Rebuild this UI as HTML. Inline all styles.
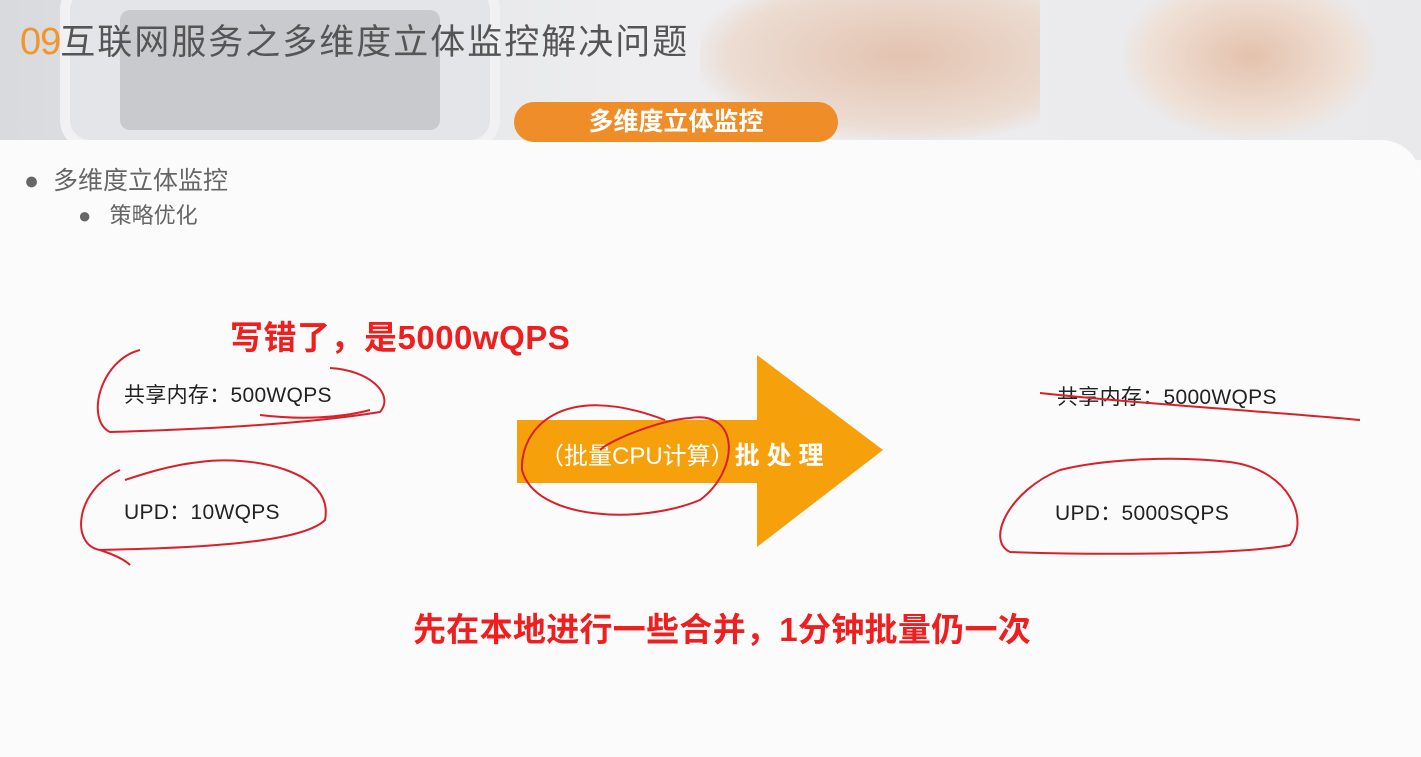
<!DOCTYPE html>
<html><head><meta charset="utf-8"><style>
body{margin:0;width:1421px;height:757px;overflow:hidden;background:#fafafa;position:relative;font-family:"Liberation Sans","Noto Sans CJK SC",sans-serif}
.top{position:absolute;left:0;top:0;width:1421px;height:160px;background:linear-gradient(90deg,#d9dadd 0%,#e6e7ea 30%,#eeeef0 45%,#e9e9ec 100%)}
.pad{position:absolute;left:60px;top:-20px;width:420px;height:150px;border-radius:30px;background:#e4e5e8;border:10px solid #f1f1f3}
.pad2{position:absolute;left:120px;top:10px;width:320px;height:120px;background:#c9cacd;border-radius:10px}
.hand{position:absolute;left:700px;top:0;width:340px;height:140px;background:radial-gradient(ellipse at 60% 40%,#e3c3b0,#ecdcd2 60%,transparent 75%)}
.hand2{position:absolute;left:1120px;top:0;width:260px;height:140px;background:radial-gradient(ellipse at 50% 40%,#e4c2ad,#efe0d6 55%,transparent 72%)}
.panel{position:absolute;left:0;top:140px;width:1421px;height:617px;background:#fbfbfb;border-radius:0 40px 0 0}
.title{position:absolute;left:20px;top:14px;font-size:35px;color:#555;letter-spacing:2px}
.title b{font-weight:normal;color:#f0962a;font-size:38px;letter-spacing:-1px}
.pill{position:absolute;left:514px;top:102px;width:324px;height:40px;border-radius:20px;background:#ef8d28;color:#fff;font-weight:bold;font-size:25px;text-align:center;line-height:40px}
.t{position:absolute;color:#222;font-size:21px;letter-spacing:0.3px}
.red{position:absolute;color:#f01e1e;font-weight:bold;font-size:33px;text-shadow:0 0 2px #fff}
svg{position:absolute;left:0;top:0}
</style></head><body>
<div class="top"><div class="pad"></div><div class="pad2"></div><div class="hand"></div><div class="hand2"></div></div>
<div class="panel"></div>
<div class="title"><b>09</b>互联网服务之多维度立体监控解决问题</div>
<div class="pill">多维度立体监控</div>
<div class="t" style="left:24px;top:161px;font-size:25px;color:#666;letter-spacing:0">●&nbsp; 多维度立体监控</div>
<div class="t" style="left:78px;top:198px;font-size:22px;color:#666;letter-spacing:0">●&nbsp;&nbsp; 策略优化</div>
<svg width="1421" height="757">
<polygon points="517,420 757,420 757,355 883,450 757,547 757,483 517,483" fill="#f6a00c"/>
</svg>
<div class="t" style="left:540px;top:436px;color:#fff;font-size:24px;letter-spacing:0">（批量CPU计算）<b style="letter-spacing:7px;font-size:25px">批处理</b></div>
<div class="t" style="left:124px;top:379px">共享内存：500WQPS</div>
<div class="t" style="left:124px;top:496px">UPD：10WQPS</div>
<div class="t" style="left:1057px;top:381px">共享内存：5000WQPS</div>
<div class="t" style="left:1055px;top:497px">UPD：5000SQPS</div>
<div class="red" style="left:230px;top:311px;letter-spacing:0.5px">写错了，是5000wQPS</div>
<div class="red" style="left:413px;top:603px;letter-spacing:0.3px">先在本地进行一些合并，1分钟批量仍一次</div>
<svg width="1421" height="757" fill="none" stroke="#d8202a" stroke-width="2">
<path d="M140,350 C100,360 85,420 110,432 C180,430 300,425 380,412 C395,395 370,370 330,368"/>
<path d="M260,415 C300,420 340,418 370,410"/>
<path d="M120,470 C75,490 70,545 100,550 C180,548 300,545 325,520 C335,470 250,455 200,462 C170,465 140,475 125,480"/>
<path d="M100,550 C115,555 125,560 130,565"/>
<path d="M665,420 C560,380 520,430 522,470 C535,520 640,525 700,500 C740,470 740,410 690,418 C660,420 610,440 600,450"/>
<path d="M1040,393 C1150,405 1280,412 1360,420"/>
<path d="M1060,470 C1010,490 985,540 1010,552 C1100,555 1240,555 1290,545 C1310,520 1290,470 1230,462 C1170,455 1100,460 1060,470"/>
</svg>
</body></html>
